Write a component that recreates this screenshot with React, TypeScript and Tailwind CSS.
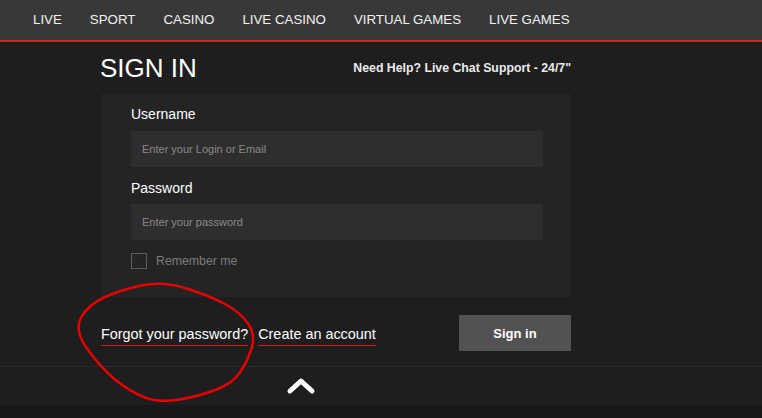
import React from 'react';

const navItems = ['LIVE', 'SPORT', 'CASINO', 'LIVE CASINO', 'VIRTUAL GAMES', 'LIVE GAMES'];

const App: React.FC = () => {
  return (
    <div className="relative w-[762px] h-[418px] overflow-hidden bg-[#1e1e1e] text-white font-['Liberation_Sans',Arial,sans-serif]">
      <nav className="flex h-[42px] bg-[#383838] border-b-2 border-[#d42323] pl-[19px]">
        {navItems.map(item => (
          <a key={item} className="px-[14px] text-[13.3px] leading-[40px] text-[#f2f2f2]">
            {item}
          </a>
        ))}
      </nav>

      <div className="ml-[101px] w-[470px]">
        <div className="flex h-[52px] items-center justify-between">
          <h1 className="text-[26px] leading-none -ml-[1px]">SIGN IN</h1>
          <span className="text-[12.3px] font-bold text-[#ececec]">Need Help? Live Chat Support - 24/7"</span>
        </div>

        <form className="bg-[#242424] pl-[30px] pr-[28px] pt-[12px] pb-[27px]">
          <label className="block text-[14px] leading-[16px]">Username</label>
          <input
            type="text"
            placeholder="Enter your Login or Email"
            className="mt-[9px] block w-full h-[36px] bg-[#2e2e2e] px-[11px] text-[11px] placeholder-[#8a8a8a] outline-none"
          />
          <label className="block mt-[13px] text-[14px] leading-[16px]">Password</label>
          <input
            type="password"
            placeholder="Enter your password"
            className="mt-[8px] block w-full h-[36px] bg-[#2e2e2e] px-[11px] text-[11px] placeholder-[#8a8a8a] outline-none"
          />
          <div className="mt-[12px] flex items-center">
            <span className="w-[16px] h-[16px] border border-[#5e5e5e]" />
            <span className="ml-[9px] text-[12.3px] text-[#7c7c7c]">Remember me</span>
          </div>
        </form>

        <div className="mt-[18px] flex items-center">
          <a className="text-[14.4px] leading-[16px] pb-[3px] mt-[5px] border-b border-[#c62020]">Forgot your password?</a>
          <a className="ml-[10px] text-[14.4px] leading-[16px] pb-[3px] mt-[5px] border-b border-[#c62020]">Create an account</a>
          <button className="ml-auto w-[112px] h-[36px] bg-[#525252] text-[13px] font-bold">Sign in</button>
        </div>
      </div>

      <div className="mt-[15px] border-t border-[#2a2a2a] h-[39px] flex items-center pl-[285px]">
        <svg width="32" height="20" viewBox="0 0 32 20">
          <path d="M5 15 L16 5 L27 15" fill="none" stroke="#fff" strokeWidth="5" strokeLinecap="round" strokeLinejoin="round" />
        </svg>
      </div>
      <div className="h-[13px] bg-[#18181b]" />

      {/* hand-drawn annotation circle */}
      <svg className="absolute inset-0 pointer-events-none" width="762" height="418">
        <path
          d="M141.5 285.5 Q163 281 186.5 288.5 Q210 296 225 304 Q240 312 248 323.5 Q256 335 251.5 348.5 Q247 362 240 372.5 Q233 383 216.5 389.5 Q200 396 180 399.5 Q160 403 145 397.5 Q130 392 115 379.5 Q100 367 87 348.5 Q74 330 81 317.5 Q88 305 104 297.5 Q120 290 141.5 285.5 Z"
          fill="none"
          stroke="#e80000"
          strokeWidth="2.5"
          strokeLinejoin="round"
        />
      </svg>
    </div>
  );
};

export default App;
